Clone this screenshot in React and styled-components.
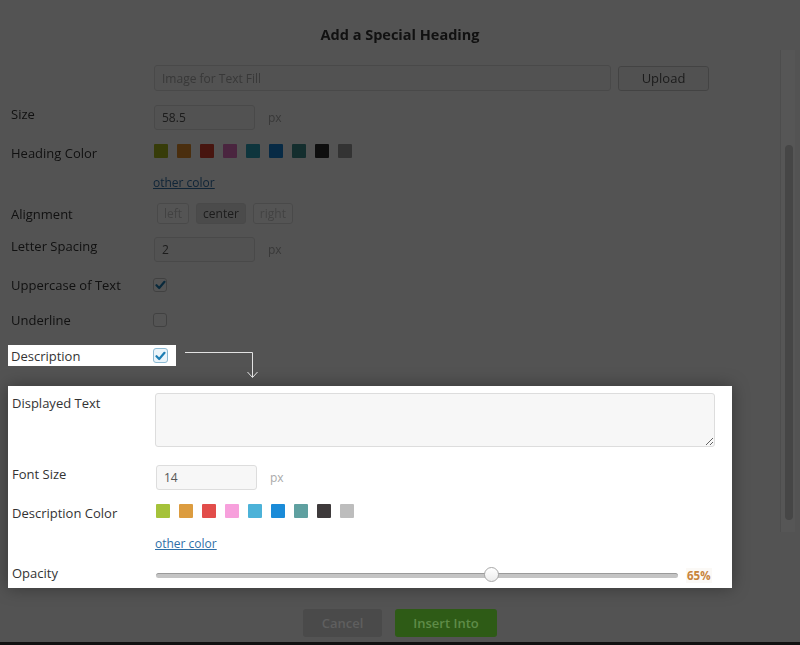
import styled, { createGlobalStyle } from 'styled-components';

const GlobalStyle = createGlobalStyle`
  html, body {
    margin: 0;
    padding: 0;
  }
  body {
    background: #535353;
    font-family: 'Open Sans', 'DejaVu Sans', sans-serif;
  }
`;

const HEADING_COLORS = ['#a8b51c', '#e08a2a', '#d8412e', '#e070c0', '#2aa0b8', '#1480d0', '#3d8c8c', '#2a2a2a', '#9a9a9a'];
const DESC_COLORS = ['#a5c23a', '#dc9c3f', '#e24d4a', '#f7a0dc', '#4cb2d8', '#1a8bd8', '#5fa0a0', '#3e3a3b', '#bdbdbd'];

const Page = styled.div`
  position: relative;
  width: 800px;
  height: 645px;
  overflow: hidden;
  display: flex;
  flex-direction: column;
  background: #535353;
`;

/* everything behind the tour overlay */
const Dim = styled.div`
  filter: brightness(0.33);
`;

const Title = styled.h1`
  margin: 0;
  height: 60px;
  box-sizing: border-box;
  padding-top: 25px;
  line-height: 20px;
  text-align: center;
  font-size: 14.5px;
  font-weight: 700;
  color: #333;
`;

const Row = styled.div`
  display: flex;
  align-items: ${(p) => (p.$top ? 'flex-start' : 'center')};
  height: ${(p) => p.$h}px;
  padding-left: ${(p) => p.$pl ?? 11}px;
`;

const Label = styled.div`
  width: ${(p) => p.$w ?? 143}px;
  flex-shrink: 0;
  font-size: 13px;
  line-height: 18px;
  color: #333;
  margin-top: ${(p) => p.$shift ?? 0}px;
`;

const Input = styled.input`
  box-sizing: border-box;
  width: ${(p) => p.$w}px;
  height: ${(p) => p.$h ?? 25}px;
  margin: 0 0 0 ${(p) => p.$ml ?? 0}px;
  padding: 0 7px;
  border: 1px solid #ddd;
  border-radius: 3px;
  background: #f7f7f7;
  font-family: inherit;
  font-size: 12px;
  color: #555;
  outline: none;

  &::placeholder {
    color: #aaa;
  }
`;

const Button = styled.div`
  box-sizing: border-box;
  width: 91px;
  height: 25px;
  margin-left: 7px;
  border: 1px solid #ccc;
  border-radius: 3px;
  background: #f5f5f5;
  display: flex;
  align-items: center;
  justify-content: center;
  font-size: 13px;
  color: #555;
`;

const Unit = styled.span`
  margin-left: 13px;
  font-size: 12px;
  color: #aaa;
`;

const Swatches = styled.div`
  display: flex;
  gap: 9px;
  margin-left: ${(p) => p.$ml ?? 0}px;
`;

const Swatch = styled.div`
  width: 14px;
  height: 14px;
  border-radius: 1px;
  background: ${(p) => p.$color};
`;

const Link = styled.a`
  font-size: 12px;
  color: #2f6fa7;
  text-decoration: underline;
`;

const AlignGroup = styled.div`
  display: flex;
  gap: 7px;
  margin-left: 3px;
`;

const AlignButton = styled.div`
  box-sizing: border-box;
  height: 21px;
  padding: 0 6px;
  border: 1px solid #ddd;
  border-radius: 3px;
  background: ${(p) => (p.$active ? '#e2e2e2' : '#fff')};
  color: ${(p) => (p.$active ? '#555' : '#c8c8c8')};
  font-size: 12px;
  line-height: 19px;
`;

const Box = styled.div`
  box-sizing: border-box;
  width: ${(p) => (p.$focus ? 15 : 14)}px;
  height: ${(p) => (p.$focus ? 15 : 14)}px;
  border: 1px solid ${(p) => (p.$focus ? '#8dbad3' : '#c4c4c4')};
  border-radius: 3px;
  background: ${(p) => (p.$focus ? '#eaf4fa' : '#fff')};
  display: flex;
  align-items: center;
  justify-content: center;
`;

const Checkbox = ({ checked, focus }) => (
  <Box $focus={focus}>
    {checked && (
      <svg width="11" height="10" viewBox="0 0 11 10">
        <path d="M1.5 5.2 L4.2 8 L9.5 1.8" fill="none" stroke="#1c7db3" strokeWidth="2.2" strokeLinecap="round" strokeLinejoin="round" />
      </svg>
    )}
  </Box>
);

const Highlight = styled.div`
  position: relative;
  box-sizing: border-box;
  width: 168px;
  height: 21px;
  margin: 3px 0 0 8px;
  padding-left: 3px;
  background: #fff;
  display: flex;
  align-items: center;
`;

const Pointer = styled.svg`
  position: absolute;
  left: 177px;
  top: 0;
`;

const Panel = styled.div`
  box-sizing: border-box;
  width: 724px;
  height: 202px;
  margin: 20px 0 0 8px;
  padding-top: 7px;
  background: #fff;
  box-shadow: 0 0 16px rgba(0, 0, 0, 0.35);
`;

const TextArea = styled.textarea`
  box-sizing: border-box;
  width: 560px;
  height: 54px;
  margin: 0;
  border: 1px solid #ddd;
  border-radius: 3px;
  background: #f7f7f7;
  resize: both;
  outline: none;
`;

const Track = styled.div`
  position: relative;
  box-sizing: border-box;
  width: 522px;
  height: 5px;
  margin-left: 1px;
  border-top: 1px solid #9a9a9a;
  border-radius: 3px;
  background: #c4c4c4;
`;

const Thumb = styled.div`
  position: absolute;
  top: -7px;
  width: 15px;
  height: 15px;
  margin-left: -11px;
  box-sizing: border-box;
  border: 1px solid #a8a8a8;
  border-radius: 50%;
  background: linear-gradient(#fff, #ececec);
`;

const Value = styled.span`
  margin-left: 8px;
  padding: 0 1px;
  background: #fbf9f6;
  font-size: 11.5px;
  font-weight: 700;
  color: #c8843c;
`;

const Footer = styled.div`
  display: flex;
  justify-content: center;
  gap: 13px;
  height: 54px;
  box-sizing: border-box;
  padding-top: 21px;
`;

const FooterButton = styled.div`
  width: ${(p) => p.$w}px;
  height: 28px;
  border-radius: 3px;
  background: ${(p) => (p.$primary ? '#2e5b16' : '#4a4a4a')};
  color: ${(p) => (p.$primary ? '#5f8c48' : '#5f5f5f')};
  display: flex;
  align-items: center;
  justify-content: center;
  font-size: 13px;
  font-weight: 600;
`;

const BottomBar = styled.div`
  height: 3px;
  background: #111;
`;

const ScrollTrack = styled.div`
  position: absolute;
  left: 780px;
  top: 50px;
  width: 15px;
  height: 482px;
  box-sizing: border-box;
  border-left: 1px solid #4d4d4d;
  background: #565656;
`;

const ScrollThumb = styled.div`
  position: absolute;
  left: 4px;
  top: 95px;
  width: 8px;
  height: 375px;
  border-radius: 4px;
  background: #464646;
`;

const Slider = ({ value }) => (
  <>
    <Track>
      <Thumb style={{ left: `${value}%` }} />
    </Track>
    <Value>{value}%</Value>
  </>
);

export default function App() {
  return (
    <Page>
      <GlobalStyle />
      <Dim>
        <Title>Add a Special Heading</Title>
        <Row $h={36}>
          <Label />
          <Input $w={457} $h={26} placeholder="Image for Text Fill" readOnly />
          <Button>Upload</Button>
        </Row>
        <Row $h={43}>
          <Label $shift={-7}>Size</Label>
          <Input $w={101} value="58.5" readOnly />
          <Unit>px</Unit>
        </Row>
        <Row $h={24}>
          <Label $shift={3}>Heading Color</Label>
          <Swatches>
            {HEADING_COLORS.map((c) => (
              <Swatch key={c} $color={c} />
            ))}
          </Swatches>
        </Row>
        <Row $h={38}>
          <Label $w={142} />
          <Link>other color</Link>
        </Row>
        <Row $h={25}>
          <Label>Alignment</Label>
          <AlignGroup>
            <AlignButton>left</AlignButton>
            <AlignButton $active>center</AlignButton>
            <AlignButton>right</AlignButton>
          </AlignGroup>
        </Row>
        <Row $h={46}>
          <Label $shift={-7}>Letter Spacing</Label>
          <Input $w={101} value="2" readOnly />
          <Unit>px</Unit>
        </Row>
        <Row $h={26}>
          <Label $w={142}>Uppercase of Text</Label>
          <Checkbox checked />
        </Row>
        <Row $h={44}>
          <Label $w={142}>Underline</Label>
          <Checkbox />
        </Row>
      </Dim>

      <Highlight>
        <Label $w={142}>Description</Label>
        <Checkbox checked focus />
        <Pointer width="80" height="34" viewBox="0 0 80 34">
          <path d="M0 7.5 H67.5 V32" fill="none" stroke="#e2e2e2" strokeWidth="1" />
          <path d="M62.5 27 L67.5 32.5 L72.5 27" fill="none" stroke="#e2e2e2" strokeWidth="1" />
        </Pointer>
      </Highlight>

      <Panel>
        <Row $h={63} $pl={4} $top>
          <Label $shift={1}>Displayed Text</Label>
          <TextArea readOnly />
        </Row>
        <Row $h={43} $pl={4}>
          <Label $shift={-7}>Font Size</Label>
          <Input $w={101} $ml={1} value="14" readOnly />
          <Unit>px</Unit>
        </Row>
        <Row $h={24} $pl={4}>
          <Label $shift={3}>Description Color</Label>
          <Swatches $ml={1}>
            {DESC_COLORS.map((c) => (
              <Swatch key={c} $color={c} />
            ))}
          </Swatches>
        </Row>
        <Row $h={40} $pl={4}>
          <Label />
          <Link>other color</Link>
        </Row>
        <Row $h={24} $pl={4}>
          <Label $shift={-5}>Opacity</Label>
          <Slider value={65} />
        </Row>
      </Panel>

      <Footer>
        <FooterButton $w={79}>Cancel</FooterButton>
        <FooterButton $w={102} $primary>
          Insert Into
        </FooterButton>
      </Footer>
      <BottomBar />

      <ScrollTrack>
        <ScrollThumb />
      </ScrollTrack>
    </Page>
  );
}
